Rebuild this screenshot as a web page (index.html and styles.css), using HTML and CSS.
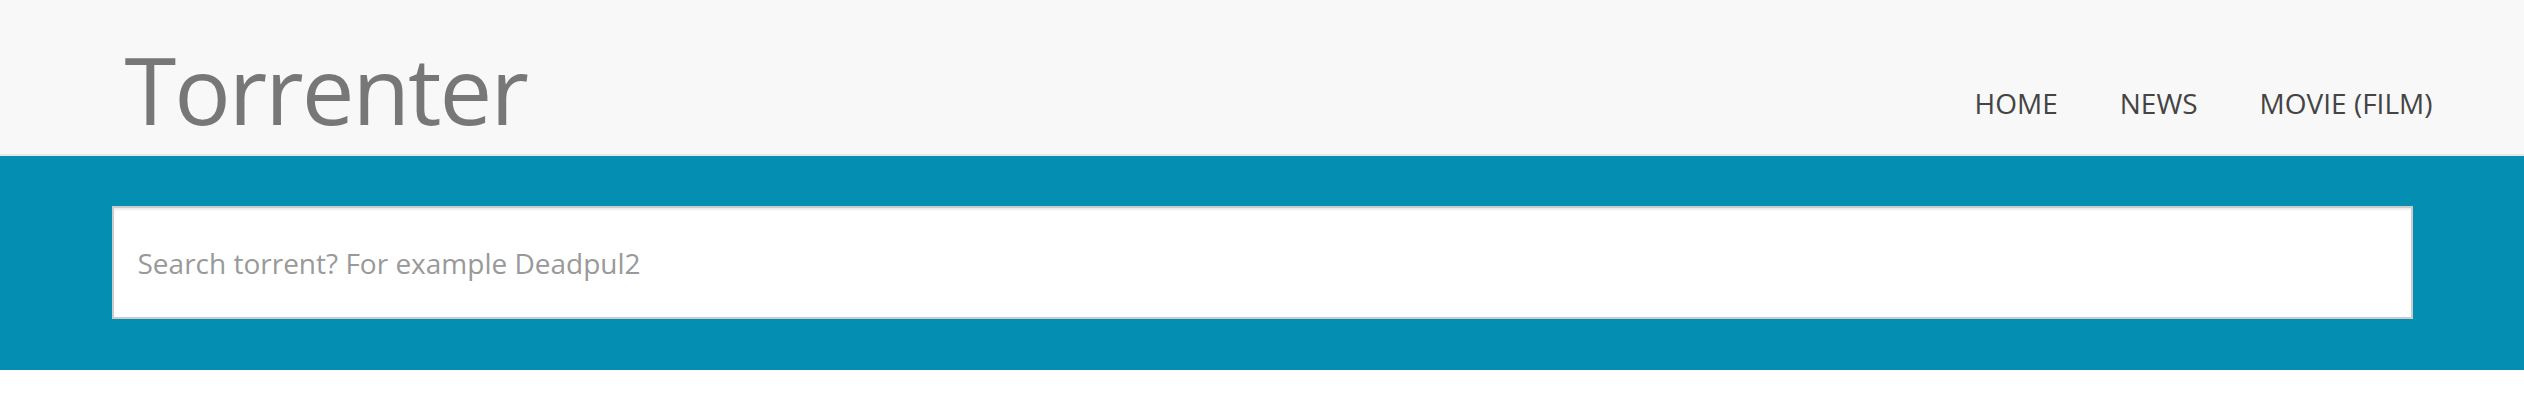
FILE: index.html
```html
<!DOCTYPE html>
<html lang="en">
<head>
<meta charset="utf-8">
<title>Torrenter</title>
<link rel="stylesheet" href="styles.css">
</head>
<body>
<header class="topbar">
  <div class="container topbar-inner">
    <a class="brand" href="#">Torrenter</a>
    <nav class="menu">
      <a href="#">HOME</a>
      <a href="#">NEWS</a>
      <a href="#">MOVIE (FILM)</a>
    </nav>
  </div>
</header>
<section class="search-band">
  <div class="container">
    <input class="search-input" type="text" placeholder="Search torrent? For example Deadpul2">
  </div>
</section>
</body>
</html>
```
FILE: styles.css
```css
html, body {
  margin: 0;
  padding: 0;
  background: #ffffff;
  font-family: "Open Sans", "Noto Sans", sans-serif;
}

.container {
  width: 2301px;
  margin: 0 auto;
  box-sizing: border-box;
}

.topbar {
  background: #f8f8f8;
  border-bottom: 2px solid #e7e7e7;
  height: 154px;
}

.topbar-inner {
  display: flex;
  justify-content: space-between;
  align-items: flex-start;
  height: 154px;
}

.brand {
  display: block;
  margin-top: 42px;
  padding-left: 13px;
  font-size: 94px;
  line-height: 94px;
  letter-spacing: -2px;
  color: #777777;
  text-decoration: none;
}

.menu {
  display: flex;
  gap: 62px;
  margin-top: 89px;
  margin-right: -20px;
}

.menu a {
  font-size: 28px;
  line-height: 28px;
  color: #444444;
  text-decoration: none;
}

.search-band {
  background: #048fb2;
  padding: 50px 0 51px;
}

.search-input {
  display: block;
  width: 100%;
  height: 113px;
  box-sizing: border-box;
  border: 2px solid #cccccc;
  border-radius: 0;
  padding: 0 24px;
  background: #ffffff;
  box-shadow: inset 0 2px 2px rgba(0, 0, 0, 0.075);
  font-family: "Open Sans", "Noto Sans", sans-serif;
  font-size: 28px;
  color: #555555;
  outline: none;
}

.search-input::placeholder {
  color: #999999;
  opacity: 1;
}
```
